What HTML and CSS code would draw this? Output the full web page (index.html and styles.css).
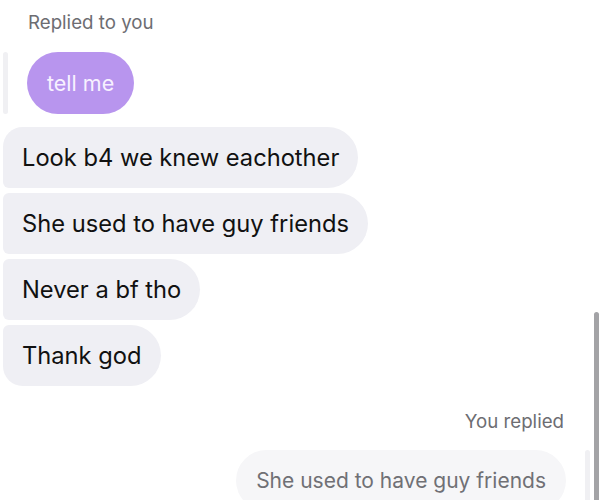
FILE: index.html
```html
<!DOCTYPE html>
<html lang="en">
<head>
  <meta charset="UTF-8" />
  <meta name="viewport" content="width=device-width, initial-scale=1.0" />
  <title>Messages</title>
  <link rel="stylesheet" href="styles.css">
</head>
<body>
  <div class="thread">
    <div class="label">Replied to you</div>
    <div class="quote">
      <div class="quote-bar"></div>
      <div class="bubble purple">tell me</div>
    </div>

    <div class="group">
      <div class="bubble grey first">Look b4 we knew eachother</div>
      <div class="bubble grey">She used to have guy friends</div>
      <div class="bubble grey">Never a bf tho</div>
      <div class="bubble grey last">Thank god</div>
    </div>

    <div class="label right">You replied</div>
    <div class="quote mine">
      <div class="bubble faded">She used to have guy friends</div>
      <div class="quote-bar"></div>
    </div>
  </div>

  <div class="scrollbar"></div>
</body>
</html>
```

FILE: styles.css
```css
body {
  margin: 0;
  background: #fff;
  font-family: 'Inter', 'Liberation Sans', sans-serif;
  overflow: hidden;
  height: 500px;
}

.thread {
  display: flex;
  flex-direction: column;
  padding: 12px 0 0 3px;
}

.label {
  font-size: 18.7px;
  line-height: 22px;
  color: #6d6d72;
  margin-left: 25px;
  margin-bottom: 18px;
}

.label.right {
  align-self: flex-end;
  margin: 0 39px 17px 0;
}

.quote {
  display: flex;
  align-items: stretch;
  gap: 19px;
}

.quote.mine {
  justify-content: flex-end;
  margin-right: 13px;
}

.quote-bar {
  width: 5px;
  border-radius: 3px;
  background: #f0f0f3;
}

.bubble {
  font-size: 23.7px;
  line-height: 27px;
  padding: 17px 19px;
  border-radius: 31px;
  white-space: nowrap;
}

.purple {
  font-size: 21.5px;
  background: #b895ee;
  color: #f7f1ff;
  padding: 18px 20px 17px;
}

.group {
  display: flex;
  flex-direction: column;
  align-items: flex-start;
  gap: 5px;
  margin: 13px 0 25px;
}

.grey {
  background: #efeff4;
  color: #111;
  border-radius: 6px 31px 31px 6px;
}

.grey.first {
  border-top-left-radius: 20px;
}

.grey.last {
  border-bottom-left-radius: 20px;
}

.faded {
  font-size: 21px;
  background: #f6f6f8;
  color: #707075;
  padding: 17px 20px;
}

.scrollbar {
  position: absolute;
  right: 4px;
  top: 312px;
  width: 5px;
  height: 200px;
  border-radius: 3px;
  background: #a3a3a6;
}
```
